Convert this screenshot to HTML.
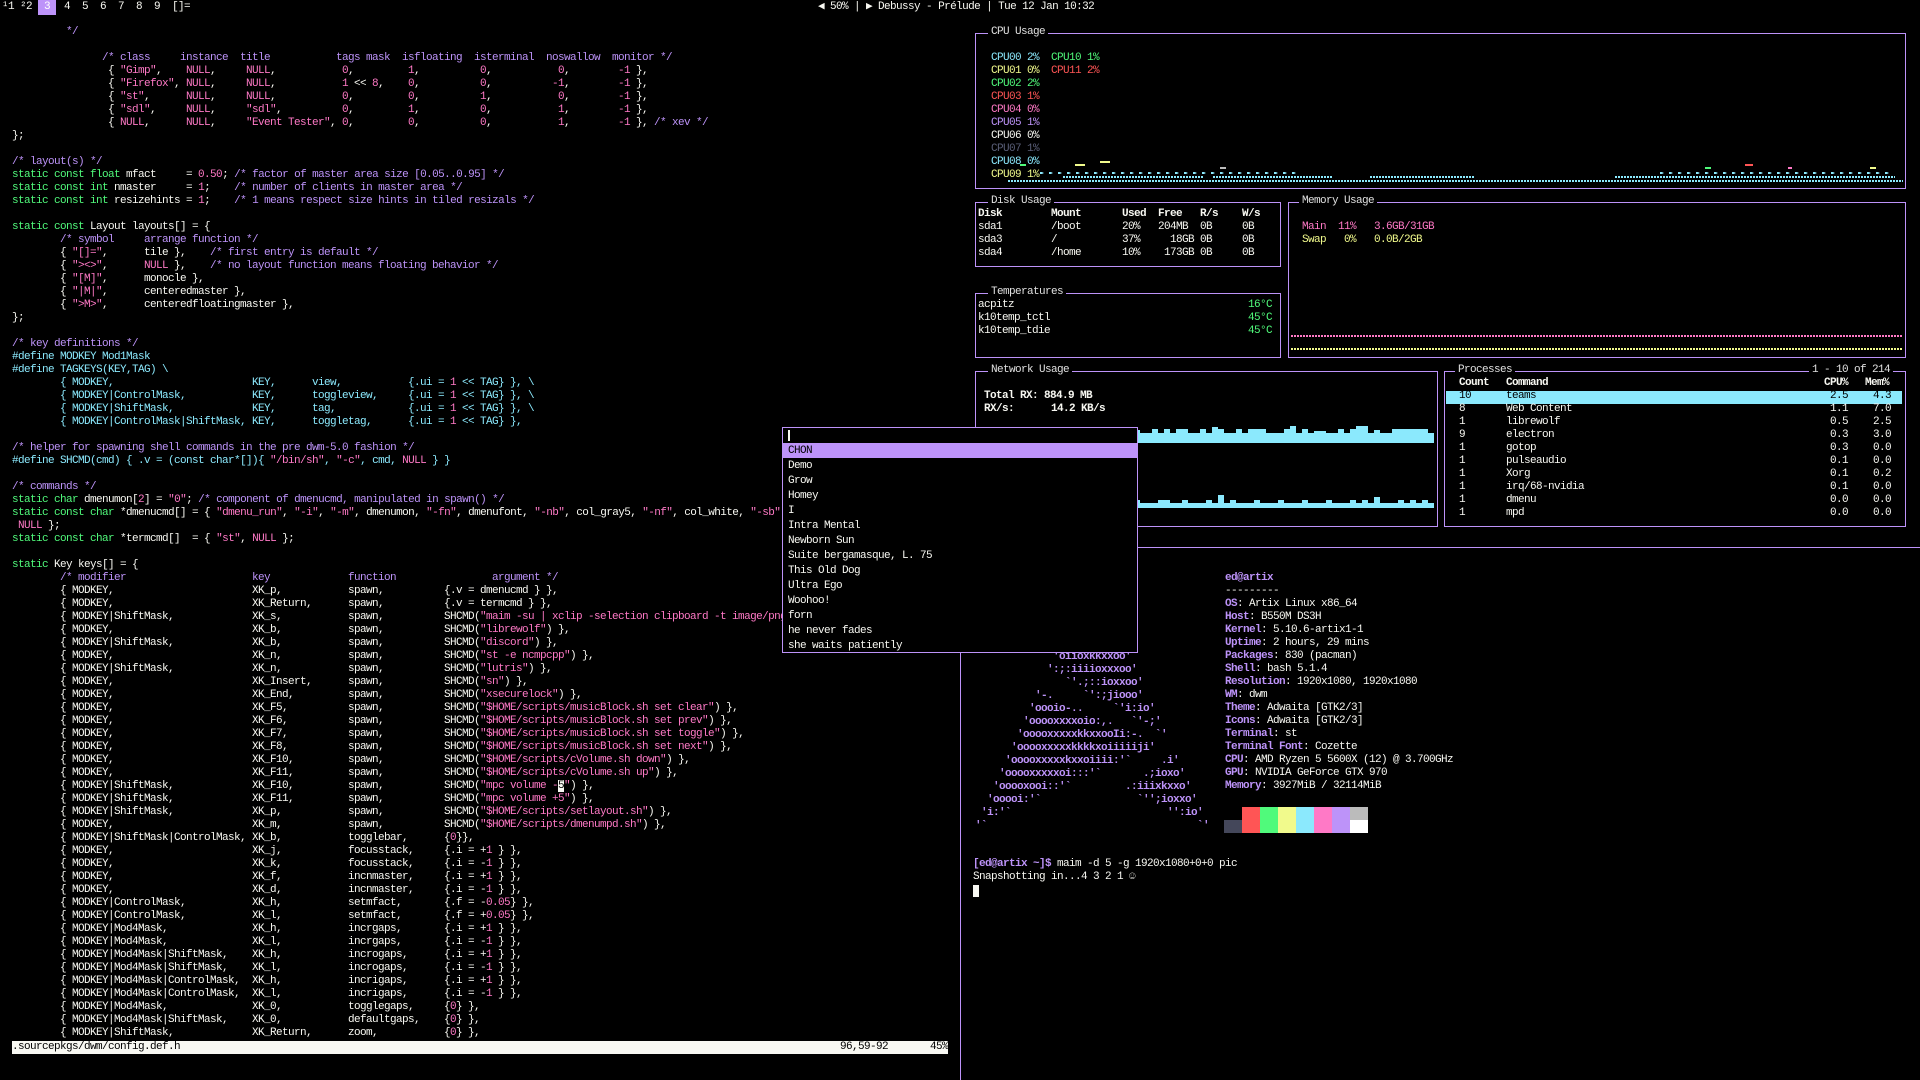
<!DOCTYPE html>
<html><head><meta charset="utf-8"><style>
*{margin:0;padding:0;box-sizing:border-box}
body{width:1920px;height:1080px;background:#000;overflow:hidden;position:relative;font:11px/13px "Liberation Mono","DejaVu Sans Mono",monospace;letter-spacing:-0.6px;color:#f8f8f2}
.a{position:absolute;white-space:pre}
.code{position:absolute;white-space:normal}
.l{height:13px;white-space:pre}
i{font-style:normal}
b{display:inline-block;font-weight:normal;white-space:pre}
.c{color:#bd93f9}.g{color:#50fa7b}.s{color:#ff79c6}.p{color:#8be9fd}.y{color:#f1fa8c}.r{color:#ff5555}.w{color:#f8f8f2}.d{color:#5a5f78}
.kl{padding-left:48px}
.m{width:192px}.k{width:96px}.f{width:96px}
.box{position:absolute;border:1px solid #bd93f9}
.t{position:absolute;background:#000;padding:0 3px;white-space:pre;color:#e0e0e0}
.bold{font-weight:bold}
</style></head><body>

<!-- top bar -->
<div class="a" style="left:2px;top:1px">¹1 ²2</div>
<div class="a" style="left:38px;top:0;width:18px;height:15px;background:#bd93f9"></div>
<div class="a" style="left:44px;top:1px;color:#fff">3</div>
<div class="a" style="left:64px;top:1px">4  5  6  7  8  9  []=</div>
<div class="a" style="left:818px;top:1px">◀ 50% | ▶ Debussy - Prélude | Tue 12 Jan 10:32</div>

<!-- left code -->
<div class="code" style="left:12px;top:26px">
<div class="l c">         */</div>
<div class="l"></div>
<div class="l c" style="padding-left:90px"><b style="width:78px">/* class</b><b style="width:60px">instance</b><b style="width:96px">title</b><b style="width:66px">tags mask</b><b style="width:72px">isfloating</b><b style="width:72px">isterminal</b><b style="width:66px">noswallow</b>monitor */</div>
<div class="l" style="padding-left:96px"><b style="width:78px">{ <i class=s>"Gimp"</i>,</b><b style="width:60px"><i class=s>NULL</i>,</b><b style="width:96px"><i class=s>NULL</i>,</b><b style="width:66px"><i class=s>0</i>,</b><b style="width:72px"><i class=s>1</i>,</b><b style="width:78px"><i class=s>0</i>,</b><b style="width:60px"><i class=s>0</i>,</b><i class=s>-1</i> },</div>
<div class="l" style="padding-left:96px"><b style="width:78px">{ <i class=s>"Firefox"</i>,</b><b style="width:60px"><i class=s>NULL</i>,</b><b style="width:96px"><i class=s>NULL</i>,</b><b style="width:66px"><i class=s>1</i> &lt;&lt; <i class=s>8</i>,</b><b style="width:72px"><i class=s>0</i>,</b><b style="width:72px"><i class=s>0</i>,</b><b style="width:66px"><i class=s>-1</i>,</b><i class=s>-1</i> },</div>
<div class="l" style="padding-left:96px"><b style="width:78px">{ <i class=s>"st"</i>,</b><b style="width:60px"><i class=s>NULL</i>,</b><b style="width:96px"><i class=s>NULL</i>,</b><b style="width:66px"><i class=s>0</i>,</b><b style="width:72px"><i class=s>0</i>,</b><b style="width:78px"><i class=s>1</i>,</b><b style="width:60px"><i class=s>0</i>,</b><i class=s>-1</i> },</div>
<div class="l" style="padding-left:96px"><b style="width:78px">{ <i class=s>"sdl"</i>,</b><b style="width:60px"><i class=s>NULL</i>,</b><b style="width:96px"><i class=s>"sdl"</i>,</b><b style="width:66px"><i class=s>0</i>,</b><b style="width:72px"><i class=s>1</i>,</b><b style="width:78px"><i class=s>0</i>,</b><b style="width:60px"><i class=s>1</i>,</b><i class=s>-1</i> },</div>
<div class="l" style="padding-left:96px"><b style="width:78px">{ <i class=s>NULL</i>,</b><b style="width:60px"><i class=s>NULL</i>,</b><b style="width:96px"><i class=s>"Event Tester"</i>,</b><b style="width:66px"><i class=s>0</i>,</b><b style="width:72px"><i class=s>0</i>,</b><b style="width:78px"><i class=s>0</i>,</b><b style="width:60px"><i class=s>1</i>,</b><i class=s>-1</i> }, <i class=c>/* xev */</i></div>
<div class="l">};</div>
<div class="l"></div>
<div class="l c">/* layout(s) */</div>
<div class="l"><i class=g>static const float</i> mfact     = <i class=s>0.50</i>; <i class=c>/* factor of master area size [0.05..0.95] */</i></div>
<div class="l"><i class=g>static const int</i> nmaster     = <i class=s>1</i>;    <i class=c>/* number of clients in master area */</i></div>
<div class="l"><i class=g>static const int</i> resizehints = <i class=s>1</i>;    <i class=c>/* 1 means respect size hints in tiled resizals */</i></div>
<div class="l"></div>
<div class="l"><i class=g>static const</i> Layout layouts[] = {</div>
<div class="l c">        /* symbol     arrange function */</div>
<div class="l" style="padding-left:48px"><b style="width:84px">{ <i class=s>"[]="</i>,</b><b style="width:66px">tile },</b><i class=c>/* first entry is default */</i></div>
<div class="l" style="padding-left:48px"><b style="width:84px">{ <i class=s>"&gt;&lt;&gt;"</i>,</b><b style="width:66px"><i class=s>NULL</i> },</b><i class=c>/* no layout function means floating behavior */</i></div>
<div class="l" style="padding-left:48px"><b style="width:84px">{ <i class=s>"[M]"</i>,</b>monocle },</div>
<div class="l" style="padding-left:48px"><b style="width:84px">{ <i class=s>"|M|"</i>,</b>centeredmaster },</div>
<div class="l" style="padding-left:48px"><b style="width:84px">{ <i class=s>"&gt;M&gt;"</i>,</b>centeredfloatingmaster },</div>
<div class="l">};</div>
<div class="l"></div>
<div class="l c">/* key definitions */</div>
<div class="l p">#define MODKEY Mod1Mask</div>
<div class="l p">#define TAGKEYS(KEY,TAG) \</div>
<div class="l p kl"><b class=m>{ MODKEY,</b><b style="width:60px">KEY,</b><b style="width:96px">view,</b>{.ui = <i class=s>1</i> &lt;&lt; TAG} }, \</div>
<div class="l p kl"><b class=m>{ MODKEY|ControlMask,</b><b style="width:60px">KEY,</b><b style="width:96px">toggleview,</b>{.ui = <i class=s>1</i> &lt;&lt; TAG} }, \</div>
<div class="l p kl"><b class=m>{ MODKEY|ShiftMask,</b><b style="width:60px">KEY,</b><b style="width:96px">tag,</b>{.ui = <i class=s>1</i> &lt;&lt; TAG} }, \</div>
<div class="l p kl"><b class=m>{ MODKEY|ControlMask|ShiftMask,</b><b style="width:60px">KEY,</b><b style="width:96px">toggletag,</b>{.ui = <i class=s>1</i> &lt;&lt; TAG} },</div>
<div class="l"></div>
<div class="l c">/* helper for spawning shell commands in the pre dwm-5.0 fashion */</div>
<div class="l p">#define SHCMD(cmd) { .v = (const char*[]){ <i class=s>"/bin/sh"</i>, <i class=s>"-c"</i>, cmd, <i class=s>NULL</i> } }</div>
<div class="l"></div>
<div class="l c">/* commands */</div>
<div class="l"><i class=g>static char</i> dmenumon[<i class=s>2</i>] = <i class=s>"0"</i>; <i class=c>/* component of dmenucmd, manipulated in spawn() */</i></div>
<div class="l"><i class=g>static const char</i> *dmenucmd[] = { <i class=s>"dmenu_run"</i>, <i class=s>"-i"</i>, <i class=s>"-m"</i>, dmenumon, <i class=s>"-fn"</i>, dmenufont, <i class=s>"-nb"</i>, col_gray5, <i class=s>"-nf"</i>, col_white, <i class=s>"-sb"</i></div>
<div class="l"> <i class=s>NULL</i> };</div>
<div class="l"><i class=g>static const char</i> *termcmd[]  = { <i class=s>"st"</i>, <i class=s>NULL</i> };</div>
<div class="l"></div>
<div class="l"><i class=g>static</i> Key keys[] = {</div>
<div class="l c kl"><b class=m>/* modifier</b><b class=k>key</b><b class=f>function</b>        argument */</div>
<div class="l kl"><b class=m>{ MODKEY,</b><b class=k>XK_p,</b><b class=f>spawn,</b>{.v = dmenucmd } },</div>
<div class="l kl"><b class=m>{ MODKEY,</b><b class=k>XK_Return,</b><b class=f>spawn,</b>{.v = termcmd } },</div>
<div class="l kl"><b class=m>{ MODKEY|ShiftMask,</b><b class=k>XK_s,</b><b class=f>spawn,</b>SHCMD(<i class=s>"maim -su | xclip -selection clipboard -t image/png"</i>) },</div>
<div class="l kl"><b class=m>{ MODKEY,</b><b class=k>XK_b,</b><b class=f>spawn,</b>SHCMD(<i class=s>"librewolf"</i>) },</div>
<div class="l kl"><b class=m>{ MODKEY|ShiftMask,</b><b class=k>XK_b,</b><b class=f>spawn,</b>SHCMD(<i class=s>"discord"</i>) },</div>
<div class="l kl"><b class=m>{ MODKEY,</b><b class=k>XK_n,</b><b class=f>spawn,</b>SHCMD(<i class=s>"st -e ncmpcpp"</i>) },</div>
<div class="l kl"><b class=m>{ MODKEY|ShiftMask,</b><b class=k>XK_n,</b><b class=f>spawn,</b>SHCMD(<i class=s>"lutris"</i>) },</div>
<div class="l kl"><b class=m>{ MODKEY,</b><b class=k>XK_Insert,</b><b class=f>spawn,</b>SHCMD(<i class=s>"sn"</i>) },</div>
<div class="l kl"><b class=m>{ MODKEY,</b><b class=k>XK_End,</b><b class=f>spawn,</b>SHCMD(<i class=s>"xsecurelock"</i>) },</div>
<div class="l kl"><b class=m>{ MODKEY,</b><b class=k>XK_F5,</b><b class=f>spawn,</b>SHCMD(<i class=s>"$HOME/scripts/musicBlock.sh set clear"</i>) },</div>
<div class="l kl"><b class=m>{ MODKEY,</b><b class=k>XK_F6,</b><b class=f>spawn,</b>SHCMD(<i class=s>"$HOME/scripts/musicBlock.sh set prev"</i>) },</div>
<div class="l kl"><b class=m>{ MODKEY,</b><b class=k>XK_F7,</b><b class=f>spawn,</b>SHCMD(<i class=s>"$HOME/scripts/musicBlock.sh set toggle"</i>) },</div>
<div class="l kl"><b class=m>{ MODKEY,</b><b class=k>XK_F8,</b><b class=f>spawn,</b>SHCMD(<i class=s>"$HOME/scripts/musicBlock.sh set next"</i>) },</div>
<div class="l kl"><b class=m>{ MODKEY,</b><b class=k>XK_F10,</b><b class=f>spawn,</b>SHCMD(<i class=s>"$HOME/scripts/cVolume.sh down"</i>) },</div>
<div class="l kl"><b class=m>{ MODKEY,</b><b class=k>XK_F11,</b><b class=f>spawn,</b>SHCMD(<i class=s>"$HOME/scripts/cVolume.sh up"</i>) },</div>
<div class="l kl"><b class=m>{ MODKEY|ShiftMask,</b><b class=k>XK_F10,</b><b class=f>spawn,</b>SHCMD(<i class=s>"mpc volume -<span style="background:#f8f8f2;color:#000">5</span>"</i>) },</div>
<div class="l kl"><b class=m>{ MODKEY|ShiftMask,</b><b class=k>XK_F11,</b><b class=f>spawn,</b>SHCMD(<i class=s>"mpc volume +5"</i>) },</div>
<div class="l kl"><b class=m>{ MODKEY|ShiftMask,</b><b class=k>XK_p,</b><b class=f>spawn,</b>SHCMD(<i class=s>"$HOME/scripts/setlayout.sh"</i>) },</div>
<div class="l kl"><b class=m>{ MODKEY,</b><b class=k>XK_m,</b><b class=f>spawn,</b>SHCMD(<i class=s>"$HOME/scripts/dmenumpd.sh"</i>) },</div>
<div class="l kl"><b class=m>{ MODKEY|ShiftMask|ControlMask,</b><b class=k>XK_b,</b><b class=f>togglebar,</b>{<i class=s>0</i>}},</div>
<div class="l kl"><b class=m>{ MODKEY,</b><b class=k>XK_j,</b><b class=f>focusstack,</b>{.i = +<i class=s>1</i> } },</div>
<div class="l kl"><b class=m>{ MODKEY,</b><b class=k>XK_k,</b><b class=f>focusstack,</b>{.i = -<i class=s>1</i> } },</div>
<div class="l kl"><b class=m>{ MODKEY,</b><b class=k>XK_f,</b><b class=f>incnmaster,</b>{.i = +<i class=s>1</i> } },</div>
<div class="l kl"><b class=m>{ MODKEY,</b><b class=k>XK_d,</b><b class=f>incnmaster,</b>{.i = -<i class=s>1</i> } },</div>
<div class="l kl"><b class=m>{ MODKEY|ControlMask,</b><b class=k>XK_h,</b><b class=f>setmfact,</b>{.f = -<i class=s>0.05</i>} },</div>
<div class="l kl"><b class=m>{ MODKEY|ControlMask,</b><b class=k>XK_l,</b><b class=f>setmfact,</b>{.f = +<i class=s>0.05</i>} },</div>
<div class="l kl"><b class=m>{ MODKEY|Mod4Mask,</b><b class=k>XK_h,</b><b class=f>incrgaps,</b>{.i = +<i class=s>1</i> } },</div>
<div class="l kl"><b class=m>{ MODKEY|Mod4Mask,</b><b class=k>XK_l,</b><b class=f>incrgaps,</b>{.i = -<i class=s>1</i> } },</div>
<div class="l kl"><b class=m>{ MODKEY|Mod4Mask|ShiftMask,</b><b class=k>XK_h,</b><b class=f>incrogaps,</b>{.i = +<i class=s>1</i> } },</div>
<div class="l kl"><b class=m>{ MODKEY|Mod4Mask|ShiftMask,</b><b class=k>XK_l,</b><b class=f>incrogaps,</b>{.i = -<i class=s>1</i> } },</div>
<div class="l kl"><b class=m>{ MODKEY|Mod4Mask|ControlMask,</b><b class=k>XK_h,</b><b class=f>incrigaps,</b>{.i = +<i class=s>1</i> } },</div>
<div class="l kl"><b class=m>{ MODKEY|Mod4Mask|ControlMask,</b><b class=k>XK_l,</b><b class=f>incrigaps,</b>{.i = -<i class=s>1</i> } },</div>
<div class="l kl"><b class=m>{ MODKEY|Mod4Mask,</b><b class=k>XK_0,</b><b class=f>togglegaps,</b>{<i class=s>0</i>} },</div>
<div class="l kl"><b class=m>{ MODKEY|Mod4Mask|ShiftMask,</b><b class=k>XK_0,</b><b class=f>defaultgaps,</b>{<i class=s>0</i>} },</div>
<div class="l kl"><b class=m>{ MODKEY|ShiftMask,</b><b class=k>XK_Return,</b><b class=f>zoom,</b>{<i class=s>0</i>} },</div>
</div>
<!-- vim status line -->
<div class="a" style="left:12px;top:1041px;width:936px;height:13px;background:#f8f8f2;color:#000">.sourcepkgs/dwm/config.def.h</div>
<div class="a" style="left:840px;top:1041px;color:#000">96,59-92</div>
<div class="a" style="left:930px;top:1041px;color:#000">45%</div>

<!-- gotop: CPU -->
<div class="box" style="left:975px;top:33px;width:931px;height:156px"></div>
<div class="t" style="left:988px;top:26px">CPU Usage</div>
<div class="a" style="left:991px;top:52px;line-height:13px"><i class=p>CPU00 2%</i>
<i class=y>CPU01 0%</i>
<i class=g>CPU02 2%</i>
<i class=r>CPU03 1%</i>
<i class=s>CPU04 0%</i>
<i class=c>CPU05 1%</i>
<i class=w>CPU06 0%</i>
<i class=d>CPU07 1%</i>
<i class=p>CPU08 0%</i>
<i class=y>CPU09 1%</i></div>
<div class="a" style="left:1051px;top:52px;line-height:13px"><i class=g>CPU10 1%</i>
<i class=r>CPU11 2%</i></div>
<div class="a" style="left:1008px;top:180px;width:895px;height:2px;background:repeating-linear-gradient(90deg,#8be9fd 0 2px,transparent 2px 3px)"></div>
<div class="a" style="left:1063px;top:176px;width:140px;height:2px;background:repeating-linear-gradient(90deg,#8be9fd 0 2px,transparent 2px 3px)"></div>
<div class="a" style="left:1213px;top:176px;width:120px;height:2px;background:repeating-linear-gradient(90deg,#8be9fd 0 2px,transparent 2px 3px)"></div>
<div class="a" style="left:1370px;top:176px;width:105px;height:2px;background:repeating-linear-gradient(90deg,#8be9fd 0 2px,transparent 2px 3px)"></div>
<div class="a" style="left:1615px;top:176px;width:280px;height:2px;background:repeating-linear-gradient(90deg,#8be9fd 0 2px,transparent 2px 3px)"></div>
<div class="a" style="left:1040px;top:172px;width:260px;height:2px;background:repeating-linear-gradient(90deg,#8be9fd 0 2px,transparent 4px 9px)"></div>
<div class="a" style="left:1660px;top:172px;width:230px;height:2px;background:repeating-linear-gradient(90deg,#8be9fd 0 2px,transparent 4px 9px)"></div>
<div class="a" style="left:1020px;top:164px;width:6px;height:2px;background:#50fa7b"></div>
<div class="a" style="left:1075px;top:164px;width:10px;height:2px;background:#f1fa8c"></div>
<div class="a" style="left:1100px;top:161px;width:10px;height:2px;background:#f1fa8c"></div>
<div class="a" style="left:1220px;top:167px;width:6px;height:2px;background:#bbb"></div>
<div class="a" style="left:1705px;top:167px;width:6px;height:2px;background:#50fa7b"></div>
<div class="a" style="left:1745px;top:164px;width:8px;height:2px;background:#ff5555"></div>
<div class="a" style="left:1788px;top:167px;width:4px;height:2px;background:#ff79c6"></div>
<div class="a" style="left:1870px;top:167px;width:6px;height:2px;background:#f1fa8c"></div>

<!-- Disk -->
<div class="box" style="left:975px;top:202px;width:306px;height:65px"></div>
<div class="t" style="left:988px;top:195px">Disk Usage</div>
<div class="a bold" style="left:978px;top:208px">Disk</div><div class="a bold" style="left:1051px;top:208px">Mount</div><div class="a bold" style="left:1122px;top:208px">Used</div><div class="a bold" style="left:1158px;top:208px">Free</div><div class="a bold" style="left:1200px;top:208px">R/s</div><div class="a bold" style="left:1242px;top:208px">W/s</div>
<div class="a" style="left:978px;top:221px;line-height:13px">sda1
sda3
sda4</div>
<div class="a" style="left:1051px;top:221px;line-height:13px">/boot
/
/home</div>
<div class="a" style="left:1122px;top:221px;line-height:13px">20%
37%
10%</div>
<div class="a" style="left:1158px;top:221px;line-height:13px">204MB
  18GB
 173GB</div>
<div class="a" style="left:1200px;top:221px;line-height:13px">0B
0B
0B</div>
<div class="a" style="left:1242px;top:221px;line-height:13px">0B
0B
0B</div>

<!-- Memory -->
<div class="box" style="left:1288px;top:202px;width:618px;height:156px"></div>
<div class="t" style="left:1299px;top:195px">Memory Usage</div>
<div class="a s" style="left:1302px;top:221px">Main  11%   3.6GB/31GB</div>
<div class="a y" style="left:1302px;top:234px">Swap   0%   0.0B/2GB</div>
<div class="a" style="left:1291px;top:335px;width:612px;height:2px;background:repeating-linear-gradient(90deg,#ff79c6 0 2px,transparent 2px 3px)"></div>
<div class="a" style="left:1291px;top:348px;width:612px;height:2px;background:repeating-linear-gradient(90deg,#f1fa8c 0 2px,transparent 2px 3px)"></div>

<!-- Temps -->
<div class="box" style="left:975px;top:293px;width:306px;height:65px"></div>
<div class="t" style="left:988px;top:286px">Temperatures</div>
<div class="a" style="left:978px;top:299px;line-height:13px">acpitz
k10temp_tctl
k10temp_tdie</div>
<div class="a g" style="left:1248px;top:299px;line-height:13px">16°C
45°C
45°C</div>

<!-- Network -->
<div class="box" style="left:975px;top:371px;width:463px;height:156px"></div>
<div class="t" style="left:988px;top:364px">Network Usage</div>
<div class="a bold" style="left:984px;top:390px">Total RX: 884.9 MB</div>
<div class="a bold" style="left:984px;top:403px">RX/s:</div>
<div class="a bold" style="left:1051px;top:403px">14.2 KB/s</div>
<svg class="a" style="left:1138px;top:425px" width="296" height="90" viewBox="0 0 296 90">
<g fill="#8be9fd">
<rect x="0" y="8" width="296" height="10"/>
<rect x="0" y="5" width="2" height="3"/><rect x="14" y="4" width="6" height="4"/><rect x="26" y="4" width="6" height="4"/><rect x="38" y="4" width="12" height="4"/><rect x="62" y="4" width="6" height="4"/><rect x="74" y="2" width="6" height="6"/><rect x="80" y="4" width="6" height="4"/><rect x="98" y="4" width="6" height="4"/><rect x="110" y="4" width="18" height="4"/><rect x="146" y="4" width="6" height="4"/><rect x="152" y="1" width="6" height="7"/><rect x="164" y="4" width="6" height="4"/><rect x="176" y="6" width="12" height="2"/><rect x="200" y="4" width="6" height="4"/><rect x="212" y="4" width="6" height="4"/><rect x="218" y="1" width="12" height="7"/><rect x="236" y="5" width="6" height="3"/><rect x="254" y="4" width="36" height="4"/>
<rect x="0" y="78" width="296" height="5"/>
<rect x="0" y="75" width="2" height="3"/><rect x="20" y="75" width="12" height="3"/><rect x="44" y="75" width="6" height="3"/><rect x="68" y="75" width="6" height="3"/><rect x="80" y="70" width="6" height="8"/><rect x="92" y="75" width="6" height="3"/><rect x="116" y="75" width="6" height="3"/><rect x="140" y="75" width="6" height="3"/><rect x="164" y="75" width="6" height="3"/><rect x="188" y="75" width="6" height="3"/><rect x="212" y="75" width="6" height="3"/><rect x="224" y="75" width="6" height="3"/><rect x="236" y="72" width="6" height="6"/><rect x="260" y="75" width="6" height="3"/><rect x="272" y="75" width="6" height="3"/><rect x="284" y="75" width="6" height="3"/>
</g></svg>

<!-- Processes -->
<div class="box" style="left:1444px;top:371px;width:462px;height:156px"></div>
<div class="t" style="left:1455px;top:364px">Processes</div>
<div class="t" style="left:1809px;top:364px">1 - 10 of 214</div>
<div class="a bold" style="left:1459px;top:377px">Count</div><div class="a bold" style="left:1506px;top:377px">Command</div><div class="a bold" style="left:1824px;top:377px">CPU%</div><div class="a bold" style="left:1865px;top:377px">Mem%</div>
<div class="a" style="left:1446px;top:391px;width:456px;height:13px;background:#8be9fd"></div>
<div class="a" style="left:1459px;top:390px;line-height:13px"><i style="color:#000">10</i>
8
1
9
1
1
1
1
1
1</div>
<div class="a" style="left:1506px;top:390px;line-height:13px"><i style="color:#000">teams</i>
Web Content
librewolf
electron
gotop
pulseaudio
Xorg
irq/68-nvidia
dmenu
mpd</div>
<div class="a" style="left:1830px;top:390px;line-height:13px"><i style="color:#000">2.5</i>
1.1
0.5
0.3
0.3
0.1
0.1
0.1
0.0
0.0</div>
<div class="a" style="left:1873px;top:390px;line-height:13px"><i style="color:#000">4.3</i>
7.0
2.5
3.0
0.0
0.0
0.2
0.0
0.0
0.0</div>

<!-- neofetch window -->
<div class="a" style="left:960px;top:547px;width:960px;height:1px;background:#bd93f9"></div>
<div class="a" style="left:960px;top:547px;width:1px;height:533px;background:#bd93f9"></div>
<div class="a c bold" style="left:975px;top:651px;line-height:13px">             'oiioxkkxxoo'
            ':;:iiiioxxxoo'
               `'.;::ioxxoo'
          '-.     `':;jiooo'
         'oooio-..     `'i:io'
        'ooooxxxxoio:,.   `'-;'
       'ooooxxxxxkkxxooIi:-.  `'
      'ooooxxxxxkkkkxoiiiiiji'
     'ooooxxxxxkxxoiiii:'`     .i'
    'ooooxxxxxoi:::'`       .;ioxo'
   'ooooxooi::'`         .:iiixkxxo'
  'ooooi:'`                `'';ioxxo'
 'i:'`                          '':io'
'`                                   `'</div>
<div class="a" style="left:1225px;top:572px;line-height:13px"><i class="c bold">ed@artix</i>
---------
<i class="c bold">OS</i>: Artix Linux x86_64
<i class="c bold">Host</i>: B550M DS3H
<i class="c bold">Kernel</i>: 5.10.6-artix1-1
<i class="c bold">Uptime</i>: 2 hours, 29 mins
<i class="c bold">Packages</i>: 830 (pacman)
<i class="c bold">Shell</i>: bash 5.1.4
<i class="c bold">Resolution</i>: 1920x1080, 1920x1080
<i class="c bold">WM</i>: dwm
<i class="c bold">Theme</i>: Adwaita [GTK2/3]
<i class="c bold">Icons</i>: Adwaita [GTK2/3]
<i class="c bold">Terminal</i>: st
<i class="c bold">Terminal Font</i>: Cozette
<i class="c bold">CPU</i>: AMD Ryzen 5 5600X (12) @ 3.700GHz
<i class="c bold">GPU</i>: NVIDIA GeForce GTX 970
<i class="c bold">Memory</i>: 3927MiB / 32114MiB</div>
<div class="a" style="left:1224px;top:820px;width:18px;height:13px;background:#44475a"></div>
<div class="a" style="left:1242px;top:807px;width:18px;height:26px;background:#ff5555"></div>
<div class="a" style="left:1260px;top:807px;width:18px;height:26px;background:#50fa7b"></div>
<div class="a" style="left:1278px;top:807px;width:18px;height:26px;background:#f1fa8c"></div>
<div class="a" style="left:1296px;top:807px;width:18px;height:26px;background:#8be9fd"></div>
<div class="a" style="left:1314px;top:807px;width:18px;height:26px;background:#ff79c6"></div>
<div class="a" style="left:1332px;top:807px;width:18px;height:26px;background:#bd93f9"></div>
<div class="a" style="left:1350px;top:807px;width:18px;height:13px;background:#bbbbbb"></div>
<div class="a" style="left:1350px;top:820px;width:18px;height:13px;background:#ffffff"></div>
<div class="a" style="left:973px;top:858px"><i class="c bold">[ed@artix ~]$</i> maim -d 5 -g 1920x1080+0+0 pic</div>
<div class="a" style="left:973px;top:871px">Snapshotting in...4 3 2 1 ☺</div>
<div class="a" style="left:973px;top:885px;width:6px;height:12px;background:#f8f8f2"></div>

<!-- dmenu -->
<div class="a" style="left:782px;top:427px;width:356px;height:226px;background:#000;border:1px solid #bd93f9"></div>
<div class="a" style="left:788px;top:430px;width:2px;height:11px;background:#f8f8f2"></div>
<div class="a" style="left:783px;top:443px;width:354px;height:15px;background:#bd93f9"></div>
<div class="a" style="left:788px;top:444px;line-height:15px"><i style="color:#000">CHON</i>
Demo
Grow
Homey
I
Intra Mental
Newborn Sun
Suite bergamasque, L. 75
This Old Dog
Ultra Ego
Woohoo!
forn
he never fades
she waits patiently</div>
</body></html>
